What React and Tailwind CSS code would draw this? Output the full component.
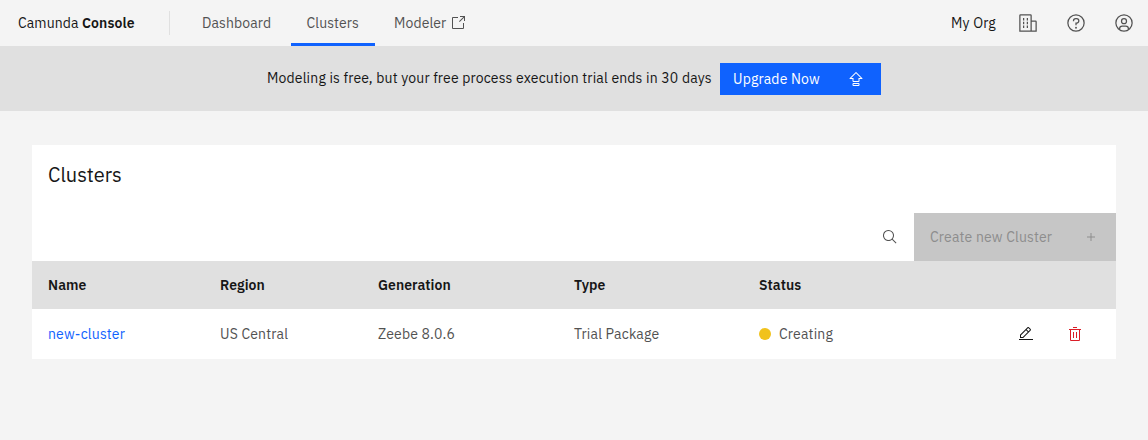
function Icon({ size = 16, className = '', children }) {
  return (
    <svg width={size} height={size} viewBox="0 0 32 32" fill="currentColor" className={`block shrink-0 ${className}`} aria-hidden="true">
      {children}
    </svg>
  );
}

const Launch = () => (
  <Icon>
    <path d="M26 28H6a2 2 0 0 1-2-2V6a2 2 0 0 1 2-2h10v2H6v20h20V16h2v10a2 2 0 0 1-2 2Z" />
    <path d="M20 2v2h6.586L18 12.586 19.414 14 28 5.414V12h2V2Z" />
  </Icon>
);

const Enterprise = () => (
  <Icon size={20}>
    <path d="M8 8h2v4H8zM8 14h2v4H8zM14 8h2v4h-2zM14 14h2v4h-2zM8 20h2v4H8zM14 20h2v4h-2z" />
    <path d="M30 14a2 2 0 0 0-2-2h-6V4a2 2 0 0 0-2-2H4a2 2 0 0 0-2 2v26h28ZM20 28H4V4h16Zm8 0h-6V14h6Z" />
  </Icon>
);

const Help = () => (
  <Icon size={20}>
    <path d="M16 2a14 14 0 1 0 14 14A14 14 0 0 0 16 2Zm0 26a12 12 0 1 1 12-12 12 12 0 0 1-12 12Z" />
    <circle cx="16" cy="23.5" r="1.5" />
    <path d="M17 8h-1.5a4.49 4.49 0 0 0-4.5 4.49V13h2v-.5a2.5 2.5 0 0 1 2.5-2.5H17a2.5 2.5 0 0 1 0 5h-2v4.5h2V17a4.5 4.5 0 0 0 0-9Z" />
  </Icon>
);

const User = () => (
  <Icon size={20}>
    <path d="M16 8a5 5 0 1 0 5 5 5 5 0 0 0-5-5Zm0 8a3 3 0 1 1 3-3 3 3 0 0 1-3 3Z" />
    <path d="M16 2a14 14 0 1 0 14 14A14 14 0 0 0 16 2Zm-6 24.377V25a3 3 0 0 1 3-3h6a3 3 0 0 1 3 3v1.377a11.9 11.9 0 0 1-12 0Zm13.993-1.451A5 5 0 0 0 19 20h-6a5 5 0 0 0-4.993 4.926 12 12 0 1 1 15.986 0Z" />
  </Icon>
);

const Upgrade = () => (
  <Icon>
    <path d="M21 24H11a2 2 0 0 0-2 2v2a2 2 0 0 0 2 2h10a2 2 0 0 0 2-2v-2a2 2 0 0 0-2-2Zm0 4H11v-2h10Z" />
    <path d="M28.707 14.293l-12-12a1 1 0 0 0-1.414 0l-12 12A1 1 0 0 0 4 16h5v4a2 2 0 0 0 2 2h10a2 2 0 0 0 2-2v-4h5a1 1 0 0 0 .707-1.707ZM21 14v6H11v-6H6.414L16 4.414 25.586 14Z" />
  </Icon>
);

const Search = () => (
  <Icon>
    <path d="M29 27.586l-7.552-7.552a11.018 11.018 0 1 0-1.414 1.414L27.586 29ZM4 13a9 9 0 1 1 9 9 9.01 9.01 0 0 1-9-9Z" />
  </Icon>
);

const Add = () => (
  <Icon>
    <path d="M17 15V8h-2v7H8v2h7v7h2v-7h7v-2Z" />
  </Icon>
);

const Edit = () => (
  <Icon>
    <path d="M2 26h28v2H2z" />
    <path d="M25.4 9c.8-.8.8-2 0-2.8l-3.6-3.6c-.8-.8-2-.8-2.8 0l-15 15V24h6.4l15-15Zm-5-5L24 7.6l-3 3L17.4 7l3-3ZM6 22v-3.6l10-10 3.6 3.6-10 10H6Z" />
  </Icon>
);

const Trash = () => (
  <Icon>
    <path d="M12 12h2v12h-2zM18 12h2v12h-2zM12 2h8v2h-8z" />
    <path d="M4 6v2h2v20a2 2 0 0 0 2 2h16a2 2 0 0 0 2-2V8h2V6Zm4 22V8h16v20Z" />
  </Icon>
);

function Header() {
  return (
    <header className="flex h-[46px] items-stretch">
      <div className="flex w-[169px] items-center pl-[18px] tracking-[0.1px] whitespace-pre">
        Camunda <b className="font-semibold tracking-[0.1px]">Console</b>
      </div>
      <div className="my-[11px] w-px bg-[#e0e0e0]" />
      <nav className="ml-[17px] flex text-[#525252]">
        <a className="flex w-[104px] items-center pl-[15px] tracking-[0.1px]">Dashboard</a>
        <a className="flex w-[84px] items-center border-b-[3px] border-[#0f62fe] pt-[3px] pl-[15.5px] tracking-[0.1px]">Clusters</a>
        <a className="flex items-center pl-[19px]">
          <span className="w-[56px] tracking-[0.1px]">Modeler</span>
          <Launch />
        </a>
      </nav>
      <div className="ml-auto flex items-center text-[#525252]">
        <span className="w-[53px] tracking-[0.16px] text-[#161616]">My Org</span>
        <span className="flex w-12 justify-center"><Enterprise /></span>
        <span className="flex w-12 justify-center"><Help /></span>
        <span className="flex w-12 justify-center"><User /></span>
      </div>
    </header>
  );
}

function Banner() {
  return (
    <div className="flex h-[65px] items-center bg-[#e0e0e0] pl-[267px]">
      <span className="w-[453px] pb-0.5 tracking-[0.16px] whitespace-nowrap">
        Modeling is free, but your free process execution trial ends in 30 days
      </span>
      <button className="mt-[1px] flex h-8 w-[161px] items-center justify-between bg-[#0f62fe] pr-[17px] pl-[13px] text-white">
        <span className="tracking-[0.16px]">Upgrade Now</span>
        <Upgrade />
      </button>
    </div>
  );
}

const columns = 'grid grid-cols-[172px_158px_196px_185px_259px_49px_1fr] items-center pl-4';

function Clusters() {
  return (
    <section className="mx-8 mt-[34px] bg-white">
      <h1 className="h-[68px] pt-4 pl-4 text-[20px] leading-7">Clusters</h1>
      <div className="flex h-12 items-center justify-end">
        <span className="mr-4 text-[#525252]"><Search /></span>
        <button className="flex h-12 w-[202px] items-center justify-between bg-[#c6c6c6] pr-[17px] pl-4 text-[#8d8d8d]">
          <span className="tracking-[0.16px]">Create new Cluster</span>
          <Add />
        </button>
      </div>
      <div className={`${columns} h-12 bg-[#e0e0e0] font-semibold tracking-[0.06px]`}>
        <span>Name</span>
        <span>Region</span>
        <span>Generation</span>
        <span>Type</span>
        <span>Status</span>
      </div>
      <div className={`${columns} h-[50px] tracking-[0.16px] text-[#525252]`}>
        <a className="text-[#0f62fe]">new-cluster</a>
        <span>US Central</span>
        <span>Zeebe 8.0.6</span>
        <span>Trial Package</span>
        <span className="flex items-center gap-2">
          <i className="size-3 rounded-full bg-[#f1c21b]" />
          Creating
        </span>
        <span className="text-[#161616]"><Edit /></span>
        <span className="text-[#da1e28]"><Trash /></span>
      </div>
    </section>
  );
}

export default function App() {
  return (
    <div className="h-[440px] w-full overflow-hidden bg-[#f4f4f4] font-['IBM_Plex_Sans',Roboto,sans-serif] text-[14px] leading-[18px] text-[#161616]">
      <Header />
      <Banner />
      <Clusters />
    </div>
  );
}
